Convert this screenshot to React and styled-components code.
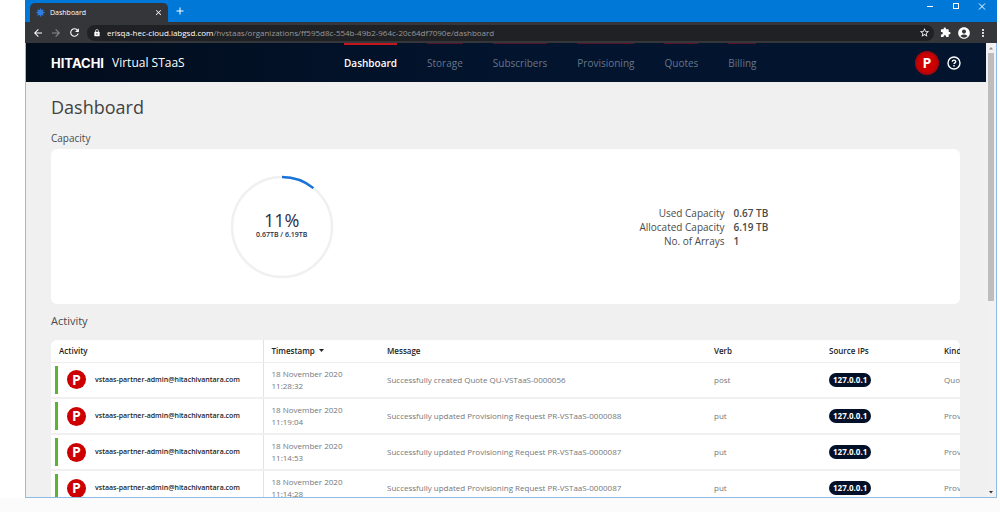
import React from "react";
import styled, { createGlobalStyle } from "styled-components";
import {
  MdArrowBack,
  MdArrowForward,
  MdRefresh,
  MdLock,
  MdStarBorder,
  MdExtension,
  MdAccountCircle,
  MdMoreVert,
  MdClose,
  MdAdd,
} from "react-icons/md";

const GlobalStyle = createGlobalStyle`
  * {
    box-sizing: border-box;
  }
  body {
    margin: 0;
    background: white;
    font-family: "Open Sans", "Noto Sans", sans-serif;
  }
  button {
    border: none;
    padding: 0;
    background: none;
    font-family: inherit;
    color: inherit;
  }
`;
const Page = styled.div`
  display: flex;
  flex-direction: column;
  height: 100vh;
  overflow: hidden;
`;
const BrowserWindow = styled.div`
  display: flex;
  flex: 1;
  flex-direction: column;
  min-height: 0;
  margin: 0 3px 0 25px;
  border: 1px solid #8fbce4;
  border-top: none;
`;
const PageFoot = styled.div`
  height: 14px;
  background: #fbfbfb;
`;

// browser chrome
const TitleBar = styled.div`
  display: flex;
  flex: none;
  height: 22px;
  margin: 0 -1px;
  background: #0078d7;
  color: white;
`;
const Tab = styled.div`
  display: flex;
  align-items: center;
  gap: 5px;
  width: 138px;
  height: 19px;
  margin: 3px 6px 0 5px;
  padding: 0 5px 0 6px;
  border-radius: 5px 5px 0 0;
  background: #35363a;
  font-size: 7px;
`;
const TabName = styled.span`
  flex: 1;
`;
const IconButton = styled.button`
  display: flex;
  align-items: center;
  justify-content: center;
  color: ${(props) => (props.$dim ? "#8a8b8e" : "white")};
`;
const WindowButtons = styled.div`
  display: flex;
  gap: 16px;
  height: 12px;
  margin-left: auto;
  padding-right: 10px;
`;
const ToolBar = styled.div`
  display: flex;
  flex: none;
  align-items: center;
  gap: 6px;
  height: 21px;
  margin: 0 -1px;
  padding: 0 8px 0 7px;
  background: #35363a;
`;
const AddressBar = styled.div`
  display: flex;
  flex: 1;
  align-items: center;
  gap: 6px;
  height: 16px;
  padding: 0 4px 0 6px;
  border-radius: 8px;
  background: #202124;
  color: white;
`;
const Address = styled.span`
  flex: 1;
  font-size: 8px;
  color: #96989c;
`;
const Host = styled.span`
  color: white;
`;

// site
const Viewport = styled.div`
  display: flex;
  flex: 1;
  min-height: 0;
  background: #f0f0f0;
`;
const Site = styled.div`
  flex: 1;
  min-width: 0;
  overflow: hidden;
`;
const Header = styled.header`
  display: grid;
  grid-template-columns: 293px 1fr auto;
  height: 39px;
  padding: 0 25px;
  background: linear-gradient(90deg, #020d1c, #02142e 50%, #02142e);
  color: white;
`;
const Brand = styled.div`
  display: flex;
  align-items: center;
  gap: 8px;
  font-size: 12px;
`;
const Logo = styled.span`
  font-family: Inter, "Liberation Sans", sans-serif;
  font-size: 13px;
  font-weight: 700;
`;
const Nav = styled.nav`
  display: flex;
  gap: 30px;
`;
const NavLink = styled.a`
  padding-top: ${(props) => (props.$active ? "10px" : "11px")};
  border-top: ${(props) =>
    props.$active ? "2px solid #c4161c" : "1px solid #561226"};
  color: ${(props) => (props.$active ? "white" : "#68768a")};
  font-size: 10px;
  font-weight: ${(props) => (props.$active ? 600 : 400)};
  line-height: 16px;
  text-decoration: none;
`;
const Account = styled.div`
  display: flex;
  align-items: center;
  gap: 8px;
`;
const Avatar = styled.span`
  display: flex;
  flex: none;
  align-items: center;
  justify-content: center;
  width: ${(props) => (props.$large ? "24px" : "19px")};
  height: ${(props) => (props.$large ? "24px" : "19px")};
  border: ${(props) => (props.$large ? "2px solid #a8060d" : "none")};
  border-radius: 50%;
  background: #cc0000;
  color: white;
  font-size: 14px;
  font-weight: 700;
  line-height: 16px;
`;
const Main = styled.main`
  padding: 14px 26px 0 25px;
`;
const Title = styled.h1`
  margin: 0 0 13px;
  color: #424242;
  font-size: 18px;
  font-weight: 400;
  line-height: 22px;
`;
const SectionTitle = styled.h2`
  margin: 0;
  color: #4a4a4a;
  font-size: ${(props) => (props.$large ? "11px" : "10px")};
  font-weight: 400;
  line-height: 14px;
`;
const CapacityCard = styled.section`
  display: grid;
  grid-template-columns: 1fr 1fr;
  align-items: center;
  height: 155px;
  margin: 4px 0 10px;
  border-radius: 6px;
  background: white;
`;
const Gauge = styled.div`
  display: grid;
  place-items: center;
  padding-left: 7px;
`;
const Ring = styled.svg`
  grid-area: 1 / 1;
`;
const GaugeText = styled.div`
  grid-area: 1 / 1;
  padding-bottom: 4px;
  color: #2d2d48;
  font-size: 7px;
  font-weight: 600;
  line-height: 10px;
  text-align: center;
`;
const Percent = styled.div`
  font-size: 18px;
  font-weight: 400;
  line-height: 20px;
`;
const Facts = styled.dl`
  display: grid;
  grid-template-columns: 219px 1fr;
  column-gap: 9px;
  margin: 0;
  color: #4a4a4a;
  font-size: 10px;
  line-height: 14px;
`;
const FactName = styled.dt`
  text-align: right;
`;
const FactValue = styled.dd`
  margin: 0;
  font-weight: 600;
`;
const TableCard = styled.section`
  margin-top: 12px;
  overflow: hidden;
  border-radius: 6px 6px 0 0;
  background: white;
`;
const Table = styled.table`
  width: calc(100% + 91px);
  table-layout: fixed;
  border-collapse: collapse;
  color: #74777b;
  font-size: 8px;
  line-height: 12px;
`;
const HeadCell = styled.th`
  width: ${(props) => props.$width || "auto"};
  height: 22px;
  padding: 0 8px;
  border-right: ${(props) => (props.$first ? "1px solid #e2e2e2" : "none")};
  border-bottom: 1px solid #ececec;
  color: #222;
  font-weight: 600;
  text-align: left;
`;
const SortButton = styled.button`
  display: flex;
  align-items: center;
  gap: 4px;
  font-size: 8px;
  font-weight: 600;
  line-height: 12px;
`;
const Cell = styled.td`
  height: 36px;
  padding: 0 8px;
  border-bottom: 2px solid #f0f0f0;
`;
const UserCell = styled(Cell)`
  padding: 0 4px;
  border-right: 1px solid #e2e2e2;
`;
const User = styled.div`
  display: flex;
  align-items: center;
  gap: 9px;
  height: 28px;
  padding-left: 9px;
  border-left: 3px solid #5cb531;
  color: #222;
  font-size: 7px;
  font-weight: 600;
`;
const IpBadge = styled.span`
  display: inline-block;
  padding: 0 4px;
  border-radius: 7px;
  background: #02102a;
  color: white;
  font-size: 8px;
  font-weight: 700;
  line-height: 14px;
`;

const ScrollBar = styled.div`
  display: flex;
  flex-direction: column;
  align-items: center;
  width: 10px;
  background: #f1f1f1;
`;
const ScrollThumb = styled.div`
  width: 6px;
  height: 248px;
  margin-bottom: auto;
  background: #bdbdbd;
`;
const ScrollArrow = styled.svg`
  flex: none;
  width: 10px;
  height: 10px;
`;

const rows = [
  { time: "11:28:32", message: "Successfully created Quote QU-VSTaaS-0000056", verb: "post", kind: "Quote" },
  { time: "11:19:04", message: "Successfully updated Provisioning Request PR-VSTaaS-0000088", verb: "put", kind: "Provisioning" },
  { time: "11:14:53", message: "Successfully updated Provisioning Request PR-VSTaaS-0000087", verb: "put", kind: "Provisioning" },
  { time: "11:14:28", message: "Successfully updated Provisioning Request PR-VSTaaS-0000087", verb: "put", kind: "Provisioning" },
];
const links = ["Dashboard", "Storage", "Subscribers", "Provisioning", "Quotes", "Billing"];

function Chrome() {
  return (
    <>
      <TitleBar>
        <Tab>
          <svg width="9" height="9" viewBox="0 0 10 10" stroke="#2f7fe0" strokeWidth="1.5">
            <path d="M5 0.5v9M0.5 5h9M1.8 1.8l6.4 6.4M8.2 1.8l-6.4 6.4" />
            <circle cx="5" cy="5" r="2" fill="#2f7fe0" />
          </svg>
          <TabName>Dashboard</TabName>
          <IconButton aria-label="Close tab">
            <MdClose size={9} />
          </IconButton>
        </Tab>
        <IconButton aria-label="New tab">
          <MdAdd size={12} />
        </IconButton>
        <WindowButtons>
          <IconButton aria-label="Minimize">
            <svg width="10" height="10" viewBox="0 0 10 10" stroke="white">
              <path d="M2 5.5h6" />
            </svg>
          </IconButton>
          <IconButton aria-label="Maximize">
            <svg width="10" height="10" viewBox="0 0 10 10" stroke="white" fill="none">
              <rect x="2.5" y="2.5" width="5" height="5" />
            </svg>
          </IconButton>
          <IconButton aria-label="Close window">
            <svg width="10" height="10" viewBox="0 0 10 10" stroke="white">
              <path d="M2 2.5l6 6M8 2.5l-6 6" />
            </svg>
          </IconButton>
        </WindowButtons>
      </TitleBar>
      <ToolBar>
        <IconButton aria-label="Back">
          <MdArrowBack size={12} />
        </IconButton>
        <IconButton aria-label="Forward" $dim>
          <MdArrowForward size={12} />
        </IconButton>
        <IconButton aria-label="Reload">
          <MdRefresh size={13} />
        </IconButton>
        <AddressBar>
          <MdLock size={8} />
          <Address>
            <Host>erisqa-hec-cloud.labgsd.com</Host>
            /hvstaas/organizations/ff595d8c-554b-49b2-964c-20c64df7090e/dashboard
          </Address>
          <IconButton aria-label="Bookmark">
            <MdStarBorder size={11} />
          </IconButton>
        </AddressBar>
        <IconButton aria-label="Extensions">
          <MdExtension size={11} />
        </IconButton>
        <IconButton aria-label="Profile">
          <MdAccountCircle size={14} />
        </IconButton>
        <IconButton aria-label="More">
          <MdMoreVert size={12} />
        </IconButton>
      </ToolBar>
    </>
  );
}

function Capacity() {
  const length = 2 * Math.PI * 50;
  return (
    <CapacityCard>
      <Gauge>
        <Ring width="104" height="104" viewBox="0 0 104 104" fill="none">
          <circle cx="52" cy="52" r="50" stroke="#f0f0f0" strokeWidth="2.5" />
          <circle
            cx="52"
            cy="52"
            r="50"
            stroke="#1a73d9"
            strokeWidth="2.5"
            strokeDasharray={`${length * 0.108} ${length}`}
            transform="rotate(-90 52 52)"
          />
        </Ring>
        <GaugeText>
          <Percent>11%</Percent>
          0.67TB / 6.19TB
        </GaugeText>
      </Gauge>
      <Facts>
        <FactName>Used Capacity</FactName>
        <FactValue>0.67 TB</FactValue>
        <FactName>Allocated Capacity</FactName>
        <FactValue>6.19 TB</FactValue>
        <FactName>No. of Arrays</FactName>
        <FactValue>1</FactValue>
      </Facts>
    </CapacityCard>
  );
}

function ActivityTable() {
  return (
    <TableCard>
      <Table>
        <thead>
          <tr>
            <HeadCell $width="212px" $first>Activity</HeadCell>
            <HeadCell $width="116px">
              <SortButton>
                Timestamp
                <svg width="5" height="3" viewBox="0 0 5 3" fill="#222">
                  <path d="M0 0h5L2.5 3z" />
                </svg>
              </SortButton>
            </HeadCell>
            <HeadCell>Message</HeadCell>
            <HeadCell $width="115px">Verb</HeadCell>
            <HeadCell $width="115px">Source IPs</HeadCell>
            <HeadCell $width="115px">Kind</HeadCell>
          </tr>
        </thead>
        <tbody>
          {rows.map((row) => (
            <tr key={row.time}>
              <UserCell>
                <User>
                  <Avatar>P</Avatar>
                  vstaas-partner-admin@hitachivantara.com
                </User>
              </UserCell>
              <Cell>
                18 November 2020
                <br />
                {row.time}
              </Cell>
              <Cell>{row.message}</Cell>
              <Cell>{row.verb}</Cell>
              <Cell>
                <IpBadge>127.0.0.1</IpBadge>
              </Cell>
              <Cell>{row.kind}</Cell>
            </tr>
          ))}
        </tbody>
      </Table>
    </TableCard>
  );
}

function App() {
  return (
    <Page>
      <GlobalStyle />
      <BrowserWindow>
        <Chrome />
        <Viewport>
          <Site>
            <Header>
              <Brand>
                <Logo>HITACHI</Logo>
                Virtual STaaS
              </Brand>
              <Nav>
                {links.map((name, i) => (
                  <NavLink key={name} href="#" $active={i === 0}>
                    {name}
                  </NavLink>
                ))}
              </Nav>
              <Account>
                <Avatar $large>P</Avatar>
                <IconButton aria-label="Help">
                  <svg width="14" height="14" viewBox="0 0 14 14" fill="none" stroke="white" strokeWidth="1.4">
                    <circle cx="7" cy="7" r="6" />
                    <path d="M5.3 5.8c0-2.2 3.4-2.2 3.4-.1 0 1.1-1.7 1.2-1.7 2.4M7 9.1v1.3" />
                  </svg>
                </IconButton>
              </Account>
            </Header>
            <Main>
              <Title>Dashboard</Title>
              <SectionTitle>Capacity</SectionTitle>
              <Capacity />
              <SectionTitle $large>Activity</SectionTitle>
              <ActivityTable />
            </Main>
          </Site>
          <ScrollBar>
            <ScrollArrow viewBox="0 0 10 10" fill="#8a8a8a">
              <path d="M3 6.5h4L5 4z" />
            </ScrollArrow>
            <ScrollThumb />
            <ScrollArrow viewBox="0 0 10 10" fill="#333">
              <path d="M3 4h4L5 6.5z" />
            </ScrollArrow>
          </ScrollBar>
        </Viewport>
      </BrowserWindow>
      <PageFoot />
    </Page>
  );
}

export default App;
